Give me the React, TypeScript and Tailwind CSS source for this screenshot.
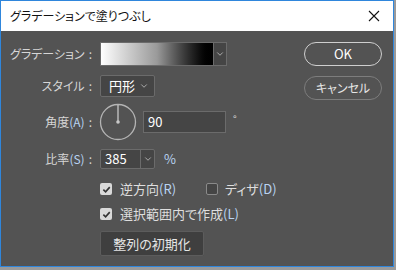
import { ChevronDown } from "lucide-react";

const jp = "[font-family:'Noto_Sans_CJK_JP','Noto_Sans',sans-serif] [font-feature-settings:'palt']";

function Acc({ k }: { k: string }) {
    return <span className="text-[#b9d3f2]">({k})</span>;
}

function Label({ children }: { children: React.ReactNode }) {
    return (
        <div className="w-[92px] shrink-0 pr-[1px] text-right text-[12px] text-[#d6d6d6]">
            {children}
            <span className="ml-[4px]">:</span>
        </div>
    );
}

function CheckBox({ checked }: { checked: boolean }) {
    if (checked) {
        return (
            <div className="flex h-[12px] w-[12px] items-center justify-center rounded-[2px] bg-[#d9d9d9]">
                <svg width="9" height="9" viewBox="0 0 10 10">
                    <path d="M1.5 5.2 L4 7.6 L8.6 2.4" fill="none" stroke="#333" strokeWidth="1.8" />
                </svg>
            </div>
        );
    }
    return <div className="h-[12px] w-[12px] rounded-[2px] border border-[#8a8a8a] bg-[#454545]" />;
}

function AngleDial() {
    return (
        <svg width="38" height="38" viewBox="0 0 38 38" className="shrink-0">
            <circle cx="19" cy="19" r="17.5" fill="none" stroke="#b4b4b4" strokeWidth="1.3" />
            <line x1="19" y1="2" x2="19" y2="18" stroke="#c8c8c8" strokeWidth="1.3" />
            <circle cx="19" cy="19" r="1.8" fill="#c8c8c8" />
        </svg>
    );
}

export default function App() {
    return (
        <div className={`h-[270px] w-[396px] bg-[#9a9a9a] ${jp}`}>
            <div className="flex h-[267px] w-[394px] flex-col border border-[#2f86dc] bg-[#535353]">
                {/* title bar */}
                <div className="flex h-[30px] items-center justify-between bg-white pl-[9px] pr-[9px]">
                    <span className="text-[12px] text-[#111]">グラデーションで塗りつぶし</span>
                    <svg width="12" height="12" viewBox="0 0 12 12" className="mr-[4px]">
                        <path d="M1 1 L11 11 M11 1 L1 11" stroke="#111" strokeWidth="1.1" />
                    </svg>
                </div>

                <div className="flex pt-[11px]">
                    {/* left column */}
                    <div className="flex w-[303px] flex-col">
                        <div className="flex h-[24px] items-center gap-[7px]">
                            <Label>グラデーション</Label>
                            <div className="flex h-[24px] w-[127px] border border-[#6b6b6b] bg-[#454545]">
                                <div className="h-full w-[112px] bg-gradient-to-r from-white via-[#9a9a9a] to-black" />
                                <div className="flex flex-1 items-center justify-center border-l border-[#6b6b6b]">
                                    <ChevronDown size={10} color="#bdbdbd" strokeWidth={2} />
                                </div>
                            </div>
                        </div>

                        <div className="mt-[9px] flex h-[22px] items-center gap-[7px]">
                            <Label>スタイル</Label>
                            <div className="flex h-[22px] w-[55px] items-center justify-between rounded-[2px] border border-[#6b6b6b] bg-[#454545] pl-[8px] pr-[5px] text-[13px] text-white">
                                <span>円形</span>
                                <ChevronDown size={10} color="#bdbdbd" strokeWidth={2} />
                            </div>
                        </div>

                        <div className="mt-[6px] flex h-[38px] items-center">
                            <div className="mr-[6px]">
                                <Label>
                                    角度<Acc k="A" />
                                </Label>
                            </div>
                            <AngleDial />
                            <div className="ml-[6px] flex h-[22px] w-[83px] items-center border border-[#6b6b6b] bg-[#454545] pl-[4px] text-[13px] text-white">
                                90
                            </div>
                            <span className="ml-[7px] mt-[-8px] text-[10px] text-[#d6d6d6]">°</span>
                        </div>

                        <div className="mt-[8px] flex h-[20px] items-center gap-[7px]">
                            <Label>
                                比率<Acc k="S" />
                            </Label>
                            <div className="flex h-[20px] w-[55px] rounded-[2px] border border-[#6b6b6b] bg-[#454545]">
                                <div className="flex w-[39px] items-center pl-[4px] text-[13px] text-white">385</div>
                                <div className="flex flex-1 items-center justify-center border-l border-[#6b6b6b]">
                                    <ChevronDown size={10} color="#bdbdbd" strokeWidth={2} />
                                </div>
                            </div>
                            <span className="ml-[2px] text-[13px] text-[#b9d3f2]">%</span>
                        </div>

                        <div className="mt-[12px] flex h-[16px] items-center pl-[99px] text-[13px] text-[#dedede]">
                            <CheckBox checked />
                            <span className="ml-[8px] w-[86px]">
                                逆方向<Acc k="R" />
                            </span>
                            <CheckBox checked={false} />
                            <span className="ml-[7px]">
                                ディザ<Acc k="D" />
                            </span>
                        </div>

                        <div className="mt-[9px] flex h-[16px] items-center pl-[99px] text-[13px] text-[#dedede]">
                            <CheckBox checked />
                            <span className="ml-[8px]">
                                選択範囲内で作成<Acc k="L" />
                            </span>
                        </div>

                        <div className="mt-[9px] pl-[99px]">
                            <div className="flex h-[25px] w-[104px] items-center justify-center rounded-[2px] border border-[#5c5c5c] bg-[#3f3f3f] text-[13px] text-[#e6e6e6]">
                                整列の初期化
                            </div>
                        </div>
                    </div>

                    {/* right column */}
                    <div className="flex flex-col gap-[10px]">
                        <div className="flex h-[24px] w-[78px] items-center justify-center rounded-full border-[1.5px] border-[#cfcfcf] text-[13px] text-white">
                            OK
                        </div>
                        <div className="flex h-[24px] w-[78px] items-center justify-center rounded-full border-[1.5px] border-[#7d7d7d] text-[12px] text-[#e6e6e6]">
                            キャンセル
                        </div>
                    </div>
                </div>
            </div>
        </div>
    );
}
